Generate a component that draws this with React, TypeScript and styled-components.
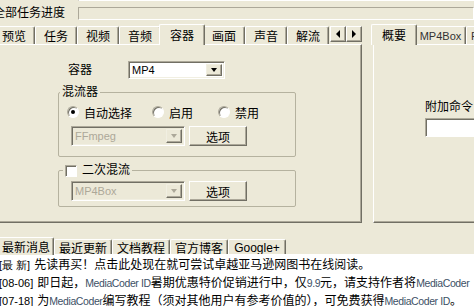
import React from 'react';
import styled, { createGlobalStyle, css } from 'styled-components';

const GlobalStyle = createGlobalStyle`
  html, body {
    margin: 0;
    padding: 0;
    background: #ece9d8;
  }
  body {
    font-family: "Liberation Sans", "Noto Sans CJK SC", sans-serif;
    font-size: 12px;
    color: #000;
  }
`;

const Window = styled.div`
  width: 474px;
  height: 306px;
  overflow: hidden;
  background: #ece9d8;
  display: flex;
  flex-direction: column;
`;

const TopField = styled.div`
  margin-left: 78px;
  height: 3px;
  border-left: 1px solid #aca899;
  border-bottom: 1px solid #fff;
  box-shadow: inset 1px 0 #716f64, inset 0 -1px #f1efe2;
`;

const ProgressRow = styled.div`
  display: flex;
  align-items: center;
  margin-top: 6px;
  height: 13px;
`;

const ProgressLabel = styled.div`
  margin-left: -7px;
  width: 85px;
  flex-shrink: 0;
  font-size: 12px;
  line-height: 13px;
  white-space: nowrap;
`;

const ProgressBox = styled.div`
  flex: 1;
  height: 13px;
  box-sizing: border-box;
  border: 1px solid;
  border-color: #aca899 #fff #fff #aca899;
`;

const MainRow = styled.div`
  display: flex;
  gap: 11px;
  margin-top: 4px;
  height: 199px;
  flex-shrink: 0;
`;

const LeftCol = styled.div`
  width: 369px;
  margin-left: -7px;
  flex-shrink: 0;
  display: flex;
  flex-direction: column;
`;

const RightCol = styled.div`
  width: 130px;
  flex-shrink: 0;
  display: flex;
  flex-direction: column;
`;

const TabStrip = styled.div<{ $h: number }>`
  display: flex;
  align-items: flex-end;
  height: ${p => p.$h}px;
  flex-shrink: 0;
`;

const tabBase = css<{ $active?: boolean; $w: number }>`
  box-sizing: border-box;
  flex-shrink: 0;
  width: ${p => p.$w}px;
  display: flex;
  align-items: center;
  justify-content: center;
  white-space: nowrap;
  background: #ece9d8;
  border-top: 1px solid #fff;
  border-left: 1px solid #fff;
  border-right: 1px solid #716f64;
  box-shadow: inset -1px 0 #aca899;
  border-radius: 2px 2px 0 0;
  font-size: 12px;
`;

const Tab = styled.div<{ $active?: boolean; $w: number }>`
  ${tabBase};
  height: 18px;
  ${p =>
    p.$active &&
    css`
      position: relative;
      z-index: 1;
      height: 21px;
      margin: 0 -2px -1px;
      width: ${p.$w + 4}px;
      padding-bottom: 2px;
    `}
`;

const LatinTab = styled(Tab)`
  font-family: "Liberation Sans", sans-serif;
  font-size: 11px;
  color: #333;
`;

const BottomTab = styled.div<{ $active?: boolean; $w: number }>`
  ${tabBase};
  height: 15px;
  padding-top: 1px;
  ${p =>
    p.$active &&
    css`
      position: relative;
      z-index: 1;
      height: 18px;
      margin-bottom: -1px;
      padding-top: 0;
    `}
`;

const ScrollButtons = styled.div`
  margin-left: auto;
  margin-bottom: 2px;
  display: flex;
`;

const ScrollButton = styled.div`
  box-sizing: border-box;
  width: 16px;
  height: 16px;
  display: flex;
  align-items: center;
  justify-content: center;
  border: 1px solid;
  border-color: #fff #716f64 #716f64 #fff;
  box-shadow: inset -1px -1px #aca899;
`;

const Arrow = styled.span<{ $dir: 'left' | 'right' | 'down'; $muted?: boolean }>`
  width: 0;
  height: 0;
  border-style: solid;
  ${p =>
    p.$dir === 'left'
      ? css`
          border-width: 4px 4px 4px 0;
          border-color: transparent #000 transparent transparent;
        `
      : p.$dir === 'right'
      ? css`
          border-width: 4px 0 4px 4px;
          border-color: transparent transparent transparent #000;
        `
      : css`
          border-width: 4px 3.5px 0 3.5px;
          border-color: ${p.$muted ? '#aca899' : '#000'} transparent transparent transparent;
        `}
`;

const Panel = styled.div`
  flex: 1;
  box-sizing: border-box;
  border-top: 1px solid #fff;
  border-left: 1px solid #fff;
  border-right: 1px solid #716f64;
  border-bottom: 1px solid #716f64;
  box-shadow: inset -1px -1px #aca899;
  display: flex;
  flex-direction: column;
`;

const SidePanel = styled(Panel)`
  border-right: none;
  box-shadow: inset 0 -1px #aca899;
`;

const FieldRow = styled.div`
  display: flex;
  align-items: center;
  margin: 16px 0 0 74px;
  height: 18px;
`;

const FieldLabel = styled.span`
  width: 60px;
  line-height: 18px;
`;

const Select = styled.div<{ $w: number; $h: number; $disabled?: boolean }>`
  box-sizing: border-box;
  width: ${p => p.$w}px;
  height: ${p => p.$h}px;
  display: flex;
  align-items: center;
  background: ${p => (p.$disabled ? '#ece9d8' : '#fff')};
  color: ${p => (p.$disabled ? '#aca899' : '#000')};
  border: 1px solid;
  border-color: #aca899 #fff #fff #aca899;
  box-shadow: inset 1px 1px #716f64, inset -1px -1px #f1efe2;
  padding: 2px;
  font-family: "Liberation Sans", sans-serif;
  font-size: 11px;
`;

const SelectText = styled.span`
  flex: 1;
  padding-left: 1px;
`;

const DropButton = styled.span`
  box-sizing: border-box;
  width: 16px;
  height: 100%;
  display: flex;
  align-items: center;
  justify-content: center;
  background: #ece9d8;
  border: 1px solid;
  border-color: #f1efe2 #716f64 #716f64 #f1efe2;
  box-shadow: inset -1px -1px #aca899;
`;

const Group = styled.fieldset<{ $pt: number; $pb: number; $mt: number }>`
  box-sizing: border-box;
  width: 238px;
  margin: ${p => p.$mt}px 0 0 64px;
  padding: ${p => p.$pt}px 0 ${p => p.$pb}px 8px;
  border: 1px solid #b5b29f;
  border-radius: 2px;
  min-width: 0;
`;

const Legend = styled.legend<{ $ml: number }>`
  margin-left: ${p => p.$ml}px;
  padding: 0 2px;
  line-height: 17px;
  display: flex;
  align-items: center;
  gap: 5px;
`;

const RadioRow = styled.div`
  display: flex;
  align-items: center;
  height: 16px;
`;

const RadioOption = styled.label<{ $w?: number }>`
  display: flex;
  align-items: center;
  gap: 5px;
  width: ${p => (p.$w ? `${p.$w}px` : 'auto')};
`;

const Radio = styled.span<{ $checked?: boolean }>`
  box-sizing: border-box;
  width: 12px;
  height: 12px;
  border-radius: 50%;
  background: #fff;
  border: 1px solid;
  border-color: #aca899 #fff #fff #aca899;
  box-shadow: inset 1px 1px #716f64;
  display: flex;
  align-items: center;
  justify-content: center;
  &::after {
    content: '';
    width: 4px;
    height: 4px;
    border-radius: 50%;
    background: ${p => (p.$checked ? '#000' : 'transparent')};
  }
`;

const Checkbox = styled.span`
  box-sizing: border-box;
  width: 12px;
  height: 12px;
  background: #fff;
  border: 1px solid;
  border-color: #aca899 #fff #fff #aca899;
  box-shadow: inset 1px 1px #716f64;
`;

const ControlRow = styled.div<{ $mt: number }>`
  display: flex;
  gap: 4px;
  margin: ${p => p.$mt}px 0 0 4px;
`;

const Button = styled.div`
  box-sizing: border-box;
  width: 58px;
  height: 20px;
  display: flex;
  align-items: center;
  justify-content: center;
  border: 1px solid;
  border-color: #fff #716f64 #716f64 #fff;
  box-shadow: inset -1px -1px #aca899;
`;

const SideLabel = styled.div`
  margin: 54px 0 0 51px;
  line-height: 17px;
  white-space: nowrap;
`;

const SideInput = styled.div`
  box-sizing: border-box;
  margin: 2px 0 0 51px;
  width: 80px;
  height: 19px;
  background: #fff;
  border: 1px solid;
  border-color: #aca899 #fff #fff #aca899;
  box-shadow: inset 1px 1px #716f64;
`;

const BottomStrip = styled(TabStrip)`
  margin: 12px 0 0 -2px;
`;

const NewsList = styled.div`
  flex: 1;
  background: #fff;
  margin-left: -1px;
  padding-top: 2px;
`;

const NewsLine = styled.div`
  height: 18px;
  line-height: 18px;
  white-space: nowrap;
  overflow: hidden;
  font-size: 12px;
`;

const DateTag = styled.span`
  font-family: "Liberation Sans", sans-serif;
  font-size: 11px;
  margin-right: 4px;
`;

const Brand = styled.span`
  font-family: "Liberation Sans", sans-serif;
  font-size: 10.5px;
  letter-spacing: -0.4px;
  color: #3d5166;
`;

const mainTabs = ['预览', '任务', '视频', '音频', '容器', '画面', '声音', '解流'];
const newsTabs = [
  { label: '最新消息', w: 56 },
  { label: '最近更新', w: 58 },
  { label: '文档教程', w: 58 },
  { label: '官方博客', w: 58 },
  { label: 'Google+', w: 58 },
];

export default function App() {
  return (
    <Window>
      <GlobalStyle />
      <TopField />
      <ProgressRow>
        <ProgressLabel>全部任务进度</ProgressLabel>
        <ProgressBox />
      </ProgressRow>

      <MainRow>
        <LeftCol>
          <TabStrip $h={20}>
            {mainTabs.map(t => (
              <Tab key={t} $w={42} $active={t === '容器'}>
                {t}
              </Tab>
            ))}
            <ScrollButtons>
              <ScrollButton>
                <Arrow $dir="left" />
              </ScrollButton>
              <ScrollButton>
                <Arrow $dir="right" />
              </ScrollButton>
            </ScrollButtons>
          </TabStrip>
          <Panel>
            <FieldRow>
              <FieldLabel>容器</FieldLabel>
              <Select $w={97} $h={18}>
                <SelectText>MP4</SelectText>
                <DropButton>
                  <Arrow $dir="down" />
                </DropButton>
              </Select>
            </FieldRow>

            <Group $mt={5} $pt={3} $pb={10}>
              <Legend $ml={-7}>混流器</Legend>
              <RadioRow>
                <RadioOption $w={85}>
                  <Radio $checked />
                  自动选择
                </RadioOption>
                <RadioOption $w={66}>
                  <Radio />
                  启用
                </RadioOption>
                <RadioOption>
                  <Radio />
                  禁用
                </RadioOption>
              </RadioRow>
              <ControlRow $mt={6}>
                <Select $w={114} $h={20} $disabled>
                  <SelectText>FFmpeg</SelectText>
                  <DropButton>
                    <Arrow $dir="down" $muted />
                  </DropButton>
                </Select>
                <Button>选项</Button>
              </ControlRow>
            </Group>

            <Group $mt={5} $pt={2} $pb={5}>
              <Legend $ml={-4}>
                <Checkbox />
                二次混流
              </Legend>
              <ControlRow $mt={0}>
                <Select $w={114} $h={20} $disabled>
                  <SelectText>MP4Box</SelectText>
                  <DropButton>
                    <Arrow $dir="down" $muted />
                  </DropButton>
                </Select>
                <Button>选项</Button>
              </ControlRow>
            </Group>
          </Panel>
        </LeftCol>

        <RightCol>
          <TabStrip $h={20}>
            <Tab $w={42} $active>
              概要
            </Tab>
            <LatinTab $w={51}>MP4Box</LatinTab>
            <LatinTab $w={51}>FFmpeg</LatinTab>
          </TabStrip>
          <SidePanel>
            <SideLabel>附加命令</SideLabel>
            <SideInput />
          </SidePanel>
        </RightCol>
      </MainRow>

      <BottomStrip $h={19}>
        {newsTabs.map((t, i) => (
          <BottomTab key={t.label} $w={t.w} $active={i === 0}>
            {t.label}
          </BottomTab>
        ))}
      </BottomStrip>

      <NewsList>
        <NewsLine>
          <DateTag>[最 新]</DateTag>先读再买！点击此处现在就可尝试卓越亚马逊网图书在线阅读。
        </NewsLine>
        <NewsLine>
          <DateTag>[08-06]</DateTag>即日起，<Brand>MediaCoder ID</Brand>暑期优惠特价促销进行中，仅<Brand>9.9</Brand>元，请支持作者将<Brand>MediaCoder</Brand>
        </NewsLine>
        <NewsLine>
          <DateTag>[07-18]</DateTag>为<Brand>MediaCoder</Brand>编写教程（须对其他用户有参考价值的），可免费获得<Brand>MediaCoder ID</Brand>。
        </NewsLine>
      </NewsList>
    </Window>
  );
}
